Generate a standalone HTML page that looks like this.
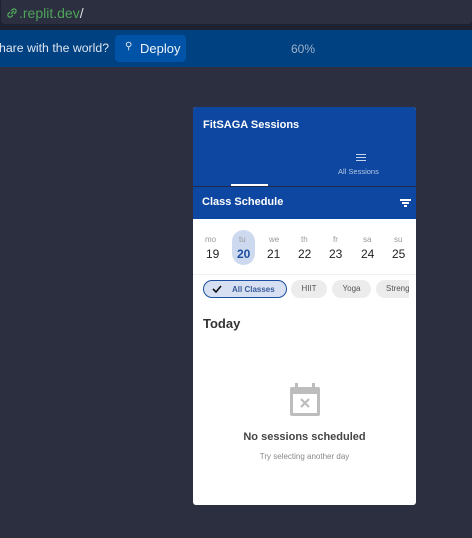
<!DOCTYPE html>
<html><head><style>
*{margin:0;padding:0;box-sizing:border-box}
body{width:472px;height:538px;background:#2b2f3f;font-family:"Liberation Sans",sans-serif;position:relative;overflow:hidden}
.a{position:absolute}
</style></head><body>
<div class="a" style="left:0;top:0;width:472px;height:30px;background:#1e2130"></div>
<div class="a" style="left:1px;top:0;width:471px;height:24px;background:#2b2f3f;border-radius:0 0 4px 4px"></div>
<svg class="a" style="left:5px;top:6px" width="14" height="14" viewBox="0 0 14 14" fill="none" stroke="#4fa35a" stroke-width="1.3"><path d="M6 8l3-3M5 6L3.5 7.5a2 2 0 0 0 3 3L8 9M9 8l1.5-1.5a2 2 0 0 0-3-3L6 5"/></svg>
<div class="a" style="left:19px;top:5px;font-size:14px;color:#4fa35a">.replit.dev<span style="color:#ddd">/</span></div>
<div class="a" style="left:0;top:30px;width:472px;height:37px;background:#004182"></div>
<div class="a" style="left:-1px;top:41px;font-size:12.3px;color:#dfe6f0">hare with the world?</div>
<div class="a" style="left:115px;top:35px;width:71px;height:27px;background:#0053a6;border-radius:4px"></div>
<div class="a" style="left:125px;top:41px;font-size:10px;color:#dfe6f0">⚲</div>
<div class="a" style="left:140px;top:41px;font-size:13px;color:#f0f4fa">Deploy</div>
<div class="a" style="left:291px;top:42px;font-size:12px;color:#9fb0c8">60%</div>

<div class="a" style="left:193px;top:107px;width:223px;height:398px;background:#fff;border-radius:3px;overflow:hidden">
 <div class="a" style="left:0;top:0;width:223px;height:79px;background:#0d47a1"></div>
 <div class="a" style="left:10px;top:12px;font-size:11px;font-weight:bold;color:#fff">FitSAGA Sessions</div>
 <div class="a" style="left:163px;top:47px;width:10px;height:1px;background:#c8d4ea;box-shadow:0 3px 0 #c8d4ea,0 6px 0 #c8d4ea"></div>
 <div class="a" style="left:145px;top:60px;font-size:7.5px;color:#b8c7e2">All Sessions</div>
 <div class="a" style="left:38px;top:77px;width:37px;height:2px;background:#fff"></div>
 <div class="a" style="left:0;top:79px;width:223px;height:1px;background:#1e2a48"></div>
 <div class="a" style="left:0;top:80px;width:223px;height:32px;background:#0d47a1"></div>
 <div class="a" style="left:9px;top:89px;font-size:11px;font-weight:bold;color:#fff">Class Schedule</div>
 <div class="a" style="left:207px;top:92px;width:11px;height:1.5px;background:#fff"></div>
 <div class="a" style="left:209px;top:95px;width:7px;height:1.5px;background:#fff"></div>
 <div class="a" style="left:211px;top:98px;width:3px;height:1.5px;background:#fff"></div>
 <div class="a" style="left:39px;top:123px;width:23px;height:35px;background:#cdd9ee;border-radius:12px"></div>
 <div class="a" style="left:0;top:128px;width:223px;font-size:8px;color:#999">
  <span class="a" style="left:12px">mo</span><span class="a" style="left:46px">tu</span><span class="a" style="left:76px">we</span><span class="a" style="left:108px">th</span><span class="a" style="left:140px">fr</span><span class="a" style="left:170px">sa</span><span class="a" style="left:201px">su</span></div>
 <div class="a" style="left:0;top:140px;width:223px;font-size:12px;color:#222">
  <span class="a" style="left:13px">19</span><span class="a" style="left:44px;color:#1e4fa0;font-weight:bold">20</span><span class="a" style="left:74px">21</span><span class="a" style="left:105px">22</span><span class="a" style="left:136px">23</span><span class="a" style="left:168px">24</span><span class="a" style="left:199px">25</span></div>
 <div class="a" style="left:0;top:167px;width:223px;height:1px;background:#f0f0f0"></div>
 <div class="a" style="left:10px;top:173px;width:84px;height:18px;border:1.5px solid #1e4fa0;background:#d6e0f2;border-radius:9px"></div>
 <svg class="a" style="left:18px;top:176px" width="12" height="12" viewBox="0 0 12 12"><path d="M2 6l3 3 5-6" fill="none" stroke="#111" stroke-width="1.6"/></svg>
 <div class="a" style="left:39px;top:178px;font-size:8px;font-weight:bold;color:#3a5a9a">All Classes</div>
 <div class="a" style="left:98px;top:173px;width:36px;height:18px;background:#ececec;border-radius:9px;font-size:8px;color:#555;text-align:center;line-height:18px">HIIT</div>
 <div class="a" style="left:139px;top:173px;width:39px;height:18px;background:#ececec;border-radius:9px;font-size:8px;color:#555;text-align:center;line-height:18px">Yoga</div>
 <div class="a" style="left:183px;top:173px;width:33px;height:18px;background:#ececec;border-radius:9px 0 0 9px;font-size:8px;color:#555;line-height:18px;padding-left:10px;overflow:hidden;white-space:nowrap">Streng</div>
 <div class="a" style="left:10px;top:209px;font-size:13px;font-weight:bold;color:#333">Today</div>
 <svg class="a" style="left:97px;top:276px" width="30" height="33" viewBox="0 0 30 33"><rect x="0" y="4" width="30" height="29" rx="2" fill="#bdbdbd"/><rect x="5" y="0" width="3" height="6" fill="#bdbdbd"/><rect x="22" y="0" width="3" height="6" fill="#bdbdbd"/><rect x="3" y="11" width="24" height="19" fill="#fff"/><path d="M11 16l8 8M19 16l-8 8" stroke="#bdbdbd" stroke-width="2.2"/></svg>
 <div class="a" style="left:0;top:324px;width:223px;text-align:center;font-size:11px;font-weight:bold;color:#444">No sessions scheduled</div>
 <div class="a" style="left:0;top:345px;width:223px;text-align:center;font-size:8px;color:#888">Try selecting another day</div>
</div>
</body></html>
